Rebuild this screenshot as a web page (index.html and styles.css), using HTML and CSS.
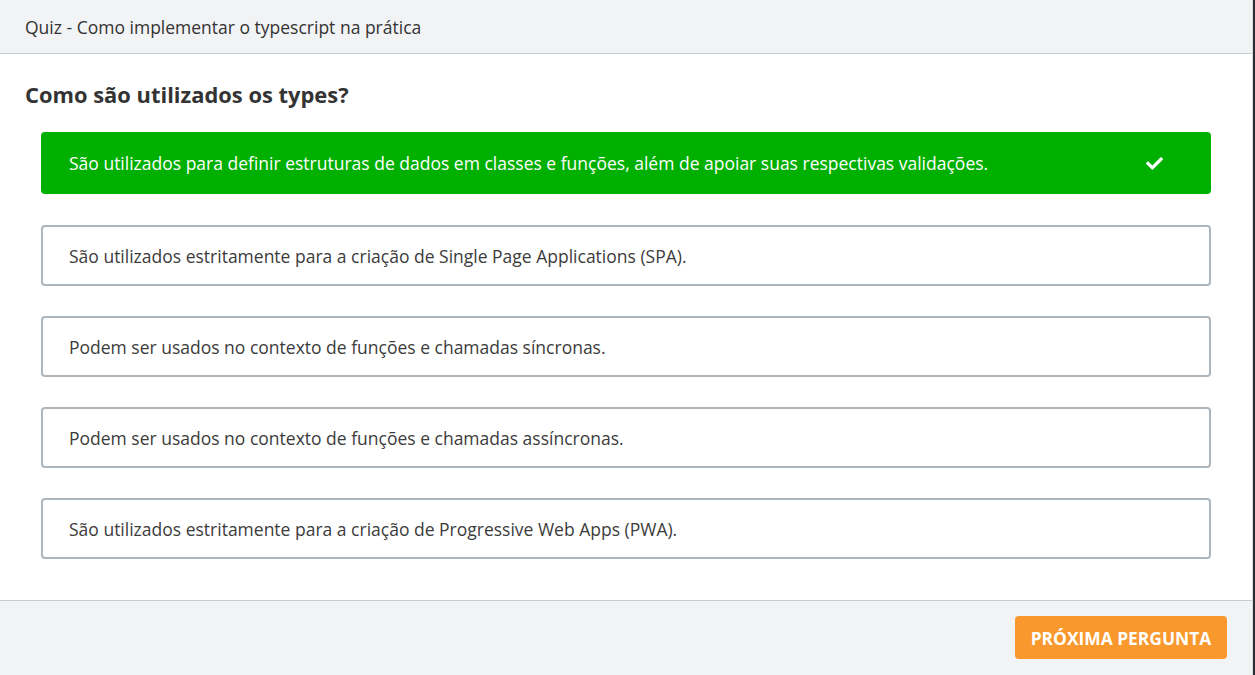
FILE: index.html
```html
<!DOCTYPE html>
<html lang="pt">
<head>
<meta charset="utf-8">
<title>Quiz</title>
<link rel="stylesheet" href="styles.css">
</head>
<body>
<div class="modal">
  <header class="modal-header">Quiz - Como implementar o typescript na prática</header>
  <main class="modal-body">
    <h2 class="question">Como são utilizados os types?</h2>
    <ul class="options">
      <li class="option correct">
        <span>São utilizados para definir estruturas de dados em classes e funções, além de apoiar suas respectivas validações.</span>
        <svg class="check" viewBox="0 0 512 512" width="17" height="17"><path fill="#fff" d="M173.9 439.4L7.5 273c-10-10-10-26.2 0-36.2l36.2-36.2c10-10 26.2-10 36.2 0L192 312.7 432.1 72.6c10-10 26.2-10 36.2 0l36.2 36.2c10 10 10 26.2 0 36.2L210.1 439.4c-10 10-26.2 10-36.2 0z"/></svg>
      </li>
      <li class="option">São utilizados estritamente para a criação de Single Page Applications (SPA).</li>
      <li class="option">Podem ser usados no contexto de funções e chamadas síncronas.</li>
      <li class="option">Podem ser usados no contexto de funções e chamadas assíncronas.</li>
      <li class="option">São utilizados estritamente para a criação de Progressive Web Apps (PWA).</li>
    </ul>
  </main>
  <footer class="modal-footer">
    <button class="next-btn">Próxima pergunta</button>
  </footer>
</div>
</body>
</html>
```

FILE: styles.css
```css
* { box-sizing: border-box; }
html, body { margin: 0; padding: 0; }
body {
  background: #2b2f33;
  font-family: "Open Sans", "Noto Sans", sans-serif;
  color: #333;
}
.modal {
  width: 1253px;
  height: 675px;
  background: #fff;
  display: flex;
  flex-direction: column;
  border-right: 1px solid #d7dadd;
}
.modal-header {
  height: 54px;
  flex: none;
  background: #f2f3f5;
  border-bottom: 1px solid #c9cdd2;
  padding: 0 25px;
  display: flex;
  align-items: center;
  font-size: 17.5px;
  color: #333;
}
.modal-body {
  flex: 1;
  padding: 26px 25px 0 25px;
}
.question {
  margin: 0 0 22px 0;
  font-size: 21.9px;
  font-weight: 700;
  line-height: 30px;
  color: #333;
}
.options {
  list-style: none;
  margin: 0 16px 0 16px;
  padding: 0;
  display: flex;
  flex-direction: column;
  gap: 30px;
}
.option {
  height: 61px;
  border: 2px solid #adb5bd;
  border-radius: 4px;
  padding: 0 26px;
  display: flex;
  align-items: center;
  font-size: 17.5px;
  color: #3c3c3c;
}
.option.correct {
  height: 62px;
  margin-bottom: 1px;
  background: #00b000;
  border-color: #00b000;
  color: #fff;
  justify-content: space-between;
  padding-right: 46px;
}
.check { flex: none; }
.modal-footer {
  height: 75px;
  flex: none;
  background: #f2f3f5;
  border-top: 1px solid #c9cdd2;
  display: flex;
  justify-content: flex-end;
  align-items: flex-start;
  padding: 15px 25px 0 0;
}
.next-btn {
  width: 212px;
  height: 43px;
  border: none;
  border-radius: 4px;
  background: #f8982d;
  color: #fff;
  font-family: "Open Sans", "Noto Sans", sans-serif;
  font-size: 17.4px;
  font-weight: 700;
  text-transform: uppercase;
  cursor: pointer;
}
```
